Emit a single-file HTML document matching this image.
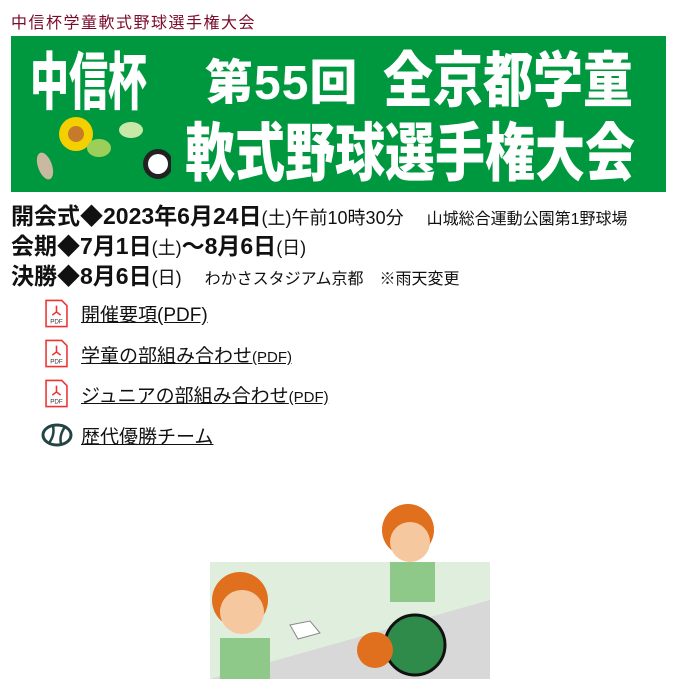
<!DOCTYPE html>
<html><head><meta charset="utf-8"><style>
body{margin:0;width:679px;height:679px;overflow:hidden;background:#fff;font-family:"Liberation Sans","Noto Sans CJK JP",sans-serif;position:relative}
.a{position:absolute;white-space:nowrap}
.t{left:11px;top:9px;font-size:16px;color:#7a0a2a;letter-spacing:1.5px}
.ban{left:11px;top:36px;width:655px;height:156px;background:#00983f;overflow:hidden}
.b{color:#fff;font-weight:900;position:absolute;white-space:nowrap;transform-origin:0 0;line-height:1}
.l{font-size:23px;color:#111;font-weight:bold;line-height:1}
.s{font-size:18px;font-weight:normal}
.xs{font-size:16px;font-weight:normal}
.lk{font-size:19px;color:#111;text-decoration:underline;left:81px}
.pdf{position:absolute;left:45px;width:23px;height:29px}
</style></head><body>
<div class="a t">中信杯学童軟式野球選手権大会</div>
<div class="a ban">
 <div class="b" style="left:19px;top:17px;font-size:39px;transform:scaleY(1.6)">中信杯</div>
 <div class="b" style="left:194px;top:24px;font-size:48px;letter-spacing:1px">第55回</div>
 <div class="b" style="left:372px;top:15px;font-size:50px;transform:scaleY(1.2)">全京都学童</div>
 <div class="b" style="left:174px;top:86px;font-size:50px;transform:scaleY(1.27)">軟式野球選手権大会</div>
 <svg style="position:absolute;left:20px;top:78px" width="140" height="80">
  <circle cx="45" cy="20" r="17" fill="#f5d000"/><circle cx="45" cy="20" r="8" fill="#c77a2a"/>
  <ellipse cx="68" cy="34" rx="12" ry="9" fill="#9ccf5a"/>
  <ellipse cx="100" cy="16" rx="12" ry="8" fill="#c8e8a8"/>
  <ellipse cx="14" cy="52" rx="7" ry="14" fill="#c9b9a0" transform="rotate(-20 14 52)"/>
  <circle cx="127" cy="50" r="15" fill="#222"/><circle cx="127" cy="50" r="10" fill="#fff"/>
 </svg>
</div>
<div class="a l" style="left:11px;top:205px">開会式◆2023年6月24日<span class="s">(土)午前10時30分</span>　<span class="xs">山城総合運動公園第1野球場</span></div>
<div class="a l" style="left:11px;top:235px">会期◆7月1日<span class="s">(土)</span>～8月6日<span class="s">(日)</span></div>
<div class="a l" style="left:11px;top:265px">決勝◆8月6日<span class="s">(日)</span>　<span class="xs">わかさスタジアム京都　※雨天変更</span></div>
<svg class="pdf" style="top:299px" viewBox="0 0 22 27"><path d="M1 1h15l5 5v20H1z" fill="#fff" stroke="#e33" stroke-width="1.5"/><text x="5" y="23" font-size="6" fill="#333">PDF</text><path d="M11 6v6M7 15l4-3 4 3" stroke="#e33" fill="none" stroke-width="1.5"/></svg>
<div class="a lk" style="top:300px">開催要項(PDF)</div>
<svg class="pdf" style="top:339px" viewBox="0 0 22 27"><path d="M1 1h15l5 5v20H1z" fill="#fff" stroke="#e33" stroke-width="1.5"/><text x="5" y="23" font-size="6" fill="#333">PDF</text><path d="M11 6v6M7 15l4-3 4 3" stroke="#e33" fill="none" stroke-width="1.5"/></svg>
<div class="a lk" style="top:341px">学童の部組み合わせ<span style="font-size:15px">(PDF)</span></div>
<svg class="pdf" style="top:379px" viewBox="0 0 22 27"><path d="M1 1h15l5 5v20H1z" fill="#fff" stroke="#e33" stroke-width="1.5"/><text x="5" y="23" font-size="6" fill="#333">PDF</text><path d="M11 6v6M7 15l4-3 4 3" stroke="#e33" fill="none" stroke-width="1.5"/></svg>
<div class="a lk" style="top:381px">ジュニアの部組み合わせ<span style="font-size:15px">(PDF)</span></div>
<svg style="position:absolute;left:41px;top:423px" width="32" height="24"><ellipse cx="16" cy="12" rx="14" ry="10" fill="none" stroke="#244" stroke-width="3"/><path d="M8 20Q14 12 12 3M20 21Q18 12 24 4" stroke="#244" stroke-width="2.5" fill="none"/></svg>
<div class="a lk" style="top:422px">歴代優勝チーム</div>
<svg style="position:absolute;left:180px;top:500px" width="320" height="179">
 <rect x="30" y="62" width="280" height="117" fill="#dfeedd"/>
 <path d="M30 179L310 100V179Z" fill="#d8d8d8"/>
 <path d="M110 125l20-4 10 12-22 6z" fill="#fff" stroke="#888"/>
 <circle cx="60" cy="100" r="28" fill="#e0701e"/><circle cx="62" cy="112" r="22" fill="#f5c8a0"/>
 <rect x="40" y="138" width="50" height="41" fill="#8fc98a"/>
 <circle cx="228" cy="30" r="26" fill="#e0701e"/><circle cx="230" cy="42" r="20" fill="#f5c8a0"/>
 <rect x="210" y="62" width="45" height="40" fill="#8fc98a"/>
 <circle cx="235" cy="145" r="30" fill="#2e8b4a" stroke="#111" stroke-width="3"/>
 <circle cx="195" cy="150" r="18" fill="#e0701e"/>
</svg>
</body></html>
